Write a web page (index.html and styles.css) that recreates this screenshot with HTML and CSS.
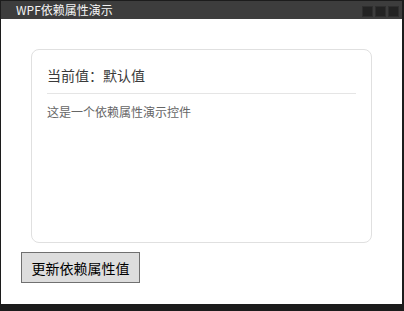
FILE: index.html
```html
<!DOCTYPE html>
<html lang="zh-CN">
<head>
    <meta charset="UTF-8">
    <title>WPF依赖属性演示</title>
    <link rel="stylesheet" href="styles.css">
</head>
<body>
    <div class="window">
        <div class="titlebar">
            <span class="title">WPF依赖属性演示</span>
            <div class="caption-buttons">
                <span class="caption-btn"></span>
                <span class="caption-btn"></span>
                <span class="caption-btn"></span>
            </div>
        </div>
        <div class="content">
            <div class="card">
                <div class="card-title">当前值：默认值</div>
                <div class="card-desc">这是一个依赖属性演示控件</div>
            </div>
            <button class="update-btn">更新依赖属性值</button>
        </div>
    </div>
</body>
</html>
```
FILE: styles.css
```css
html, body {
    margin: 0;
    padding: 0;
    height: 100%;
    overflow: hidden;
}

body {
    background-color: #1c1c1c;
    font-family: "Noto Sans CJK SC", "Noto Sans", sans-serif;
    padding: 1px 2px 7px 1px;
    box-sizing: border-box;
}

.window {
    display: flex;
    flex-direction: column;
    height: 100%;
}

.titlebar {
    height: 18px;
    background-color: #3d3d3d;
    display: flex;
    align-items: center;
    justify-content: space-between;
    padding: 0 3px 0 15px;
}

.title {
    color: #f4f4f4;
    font-size: 12px;
    line-height: 18px;
}

.caption-buttons {
    display: flex;
    gap: 2px;
    margin-top: 2px;
}

.caption-btn {
    width: 9px;
    height: 9px;
    background-color: #232323;
    border: 1px solid #2f2f2f;
}

.content {
    flex: 1;
    background-color: #ffffff;
    padding: 30px 30px 0 20px;
}

.card {
    margin-left: 10px;
    height: 194px;
    border: 1px solid #e0e0e0;
    border-radius: 8px;
    padding: 15px 15px 0 15px;
    box-sizing: border-box;
}

.card-title {
    font-size: 14px;
    line-height: 20px;
    color: #3a3a3a;
    padding-bottom: 8px;
    border-bottom: 1px solid #e5e5e5;
}

.card-desc {
    font-size: 12px;
    line-height: 16px;
    color: #666666;
    margin-top: 10px;
}

.update-btn {
    margin-top: 9px;
    width: 119px;
    height: 31px;
    background-color: #dddddd;
    border: 1px solid #707070;
    font-family: "Noto Sans CJK SC", sans-serif;
    font-size: 14px;
    color: #000000;
    padding: 0;
}
```
